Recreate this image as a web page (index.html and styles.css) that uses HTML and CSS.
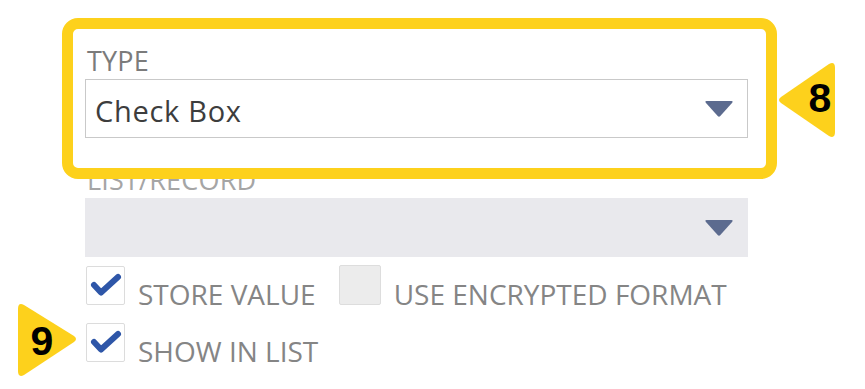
FILE: index.html
```html
<!DOCTYPE html>
<html lang="en">
<head>
  <meta charset="UTF-8">
  <title>Custom Field - Type</title>
  <link rel="stylesheet" href="styles.css">
</head>
<body>
  <div class="page">
    <div class="form">
      <div class="field">
        <div class="label">TYPE</div>
        <div class="select">
          <span class="value">Check Box</span>
          <svg class="arrow" width="28" height="16" viewBox="0 0 28 16"><path d="M1.5 0H26.5Q28.5 0 27 2L15.3 15Q14 16.3 12.7 15L1 2Q-0.5 0 1.5 0Z"/></svg>
        </div>
      </div>

      <div class="field">
        <div class="label disabled">LIST/RECORD</div>
        <div class="select is-disabled">
          <span class="value"></span>
          <svg class="arrow" width="28" height="16" viewBox="0 0 28 16"><path d="M1.5 0H26.5Q28.5 0 27 2L15.3 15Q14 16.3 12.7 15L1 2Q-0.5 0 1.5 0Z"/></svg>
        </div>
      </div>

      <div class="checks">
        <label class="check">
          <span class="box">
            <svg class="tick" width="38" height="38" viewBox="0 0 38 38"><path d="M8 19L15 26.5L32 11"/></svg>
          </span>
          <span class="text">STORE VALUE</span>
        </label>
        <label class="check">
          <span class="box off"></span>
          <span class="text">USE ENCRYPTED FORMAT</span>
        </label>
      </div>
      <div class="checks">
        <label class="check">
          <span class="box">
            <svg class="tick" width="38" height="38" viewBox="0 0 38 38"><path d="M8 19L15 26.5L32 11"/></svg>
          </span>
          <span class="text">SHOW IN LIST</span>
        </label>
      </div>
    </div>

    <!-- annotation overlays -->
    <div class="highlight"></div>
    <svg class="callout callout-8" width="62" height="76" viewBox="0 0 62 76">
      <path d="M4 41Q0 38 4 35L52 2Q58 -1 58 6V70Q58 77 52 74Z" class="flag"/>
      <text x="43" y="50" class="num">8</text>
    </svg>
    <svg class="callout callout-9" width="64" height="76" viewBox="0 0 64 76">
      <path d="M60 40Q64 37 60 34L10 3Q4 0 4 7V69Q4 76 10 73Z" class="flag"/>
      <text x="28" y="53" class="num">9</text>
    </svg>
  </div>
</body>
</html>
```

FILE: styles.css
```css
body {
  margin: 0;
  background: #fff;
  font-family: 'Open Sans', 'Noto Sans', sans-serif;
}
.page {
  position: relative;
  width: 865px;
  height: 389px;
  overflow: hidden;
}
.form {
  padding: 46px 0 0 85px;
  width: 663px;
  display: flex;
  flex-direction: column;
}
.field {
  display: flex;
  flex-direction: column;
  gap: 3px;
  margin-bottom: 27px;
}
.field + .field {
  margin-bottom: 8px;
}
.label {
  font-size: 27px;
  line-height: 30px;
  color: #7b7b7b;
  padding-left: 2px;
  letter-spacing: 0.2px;
}
.label.disabled {
  color: #a5a5a5;
}
.select {
  box-sizing: border-box;
  height: 59px;
  border: 1px solid #c9c9c9;
  display: flex;
  align-items: center;
  justify-content: space-between;
  padding: 3px 14px 0 9px;
  background: #fff;
}
.select.is-disabled {
  background: #e9e9ed;
  border-color: #e9e9ed;
}
.value {
  font-size: 29px;
  color: #3d3d3d;
  letter-spacing: 0.7px;
}
.arrow {
  fill: #5c6b8f;
  margin-bottom: 3px;
}
.checks {
  display: flex;
  align-items: flex-end;
  gap: 23px;
  margin-bottom: 18px;
  padding-left: 1px;
}
.check {
  display: flex;
  align-items: flex-end;
  gap: 13px;
}
.box {
  position: relative;
  width: 37px;
  height: 37px;
  border: 1px solid #dcdcdc;
  border-radius: 2px;
  background: #fff;
}
.box.off {
  width: 40px;
  height: 38px;
  background: #ececec;
  border-color: #dddddd;
}
.tick {
  position: absolute;
  left: -1px;
  top: -1px;
  fill: none;
  stroke: #2e56a8;
  stroke-width: 6;
  stroke-linecap: round;
  stroke-linejoin: round;
}
.text {
  font-size: 28px;
  line-height: 28px;
  color: #858585;
  margin-bottom: -3px;
}
.highlight {
  position: absolute;
  left: 62px;
  top: 18px;
  width: 693px;
  height: 139px;
  border: 11px solid #fdd11c;
  border-radius: 16px;
}
.callout {
  position: absolute;
}
.callout-8 {
  left: 777px;
  top: 62px;
}
.callout-9 {
  left: 14px;
  top: 302px;
}
.flag {
  fill: #fdd11c;
}
.num {
  font-family: 'Liberation Sans', Arial, sans-serif;
  font-weight: bold;
  font-size: 41px;
  fill: #000;
  text-anchor: middle;
}
```
